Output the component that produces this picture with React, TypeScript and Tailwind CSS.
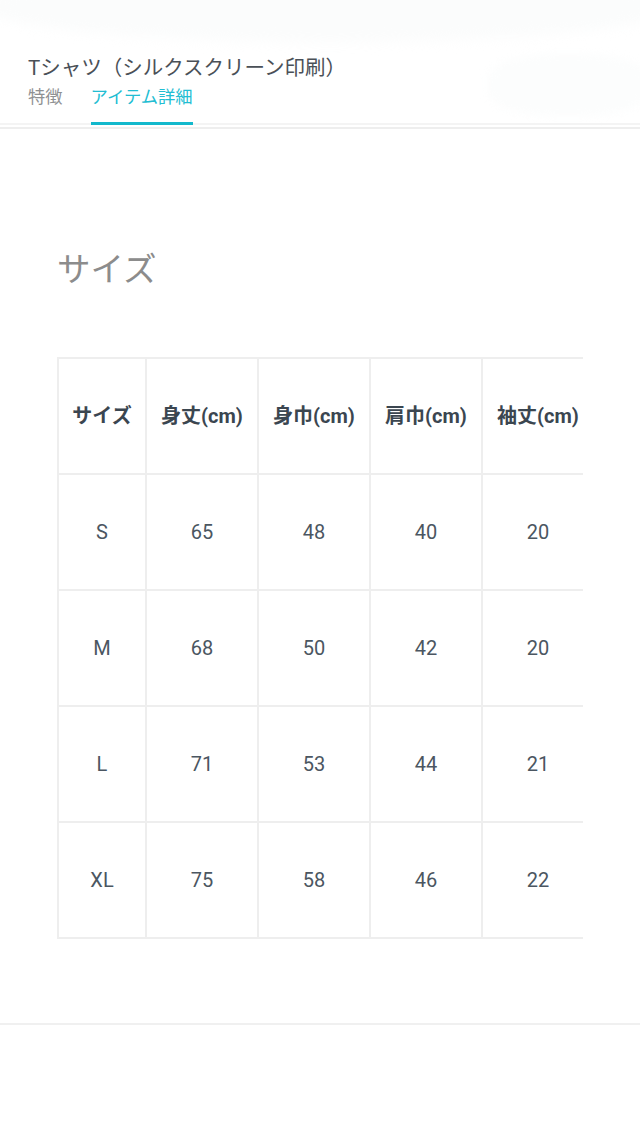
import React from "react";

const headers = ["サイズ", "身丈(cm)", "身巾(cm)", "肩巾(cm)", "袖丈(cm)"];
const rows = [
  ["S", "65", "48", "40", "20"],
  ["M", "68", "50", "42", "20"],
  ["L", "71", "53", "44", "21"],
  ["XL", "75", "58", "46", "22"],
];

const font = { fontFamily: 'Roboto, "Noto Sans CJK JP", sans-serif' };

export default function App() {
  return (
    <div className="relative w-[640px] min-h-[1138px] bg-white overflow-hidden" style={font}>
      <div className="absolute left-[-20px] top-[-30px] w-[700px] h-[72px] rounded-[50%] bg-[#fbfcfc] blur-[6px]" />
      <div className="absolute left-[488px] top-[54px] w-[160px] h-[62px] rounded-[40%] bg-[#fcfdfd] blur-[4px]" />

      <header className="relative border-b-2 border-[#f4f4f4] pt-[56px]">
        <div className="px-[28px] text-[20.5px] leading-[24px] text-[#4a5057]">
          Tシャツ（シルクスクリーン印刷）
        </div>
        <div className="flex px-[28px] gap-[28px]">
          <div className="pt-[6px] pb-[12px] border-b-[3px] border-transparent text-[17.3px] leading-[22px] text-[#8f9193]">
            特徴
          </div>
          <div className="pt-[6px] pb-[12px] border-b-[3px] border-[#12b8cc] text-[17.3px] leading-[22px] text-[#22bdd2] -mb-[2px]">
            アイテム詳細
          </div>
        </div>
      </header>
      <div className="h-[2px]" />
      <div className="border-t-2 border-[#eeeeee]" />

      <section className="pl-[57px] pt-[121px] pb-[84px]">
        <h2 className="text-[33.5px] leading-[40px] text-[#8c8c8c]">サイズ</h2>
        <div className="mt-[67px] w-[526px] overflow-hidden">
          <div className="w-max border-t-2 border-l-2 border-[#eeeeee]">
            {[headers, ...rows].map((row, ri) => (
              <div key={ri} className="flex">
                {row.map((cell, ci) => (
                  <div
                    key={ci}
                    className={`${ci === 0 ? "w-[88px]" : "w-[112px]"} h-[116px] box-border border-r-2 border-b-2 border-[#eeeeee] flex items-center justify-center ${
                      ri === 0
                        ? "text-[20px] font-bold text-[#3b4650]"
                        : "text-[20px] text-[#4b5661]"
                    }`}
                  >
                    {cell}
                  </div>
                ))}
              </div>
            ))}
          </div>
        </div>
      </section>
      <div className="border-t-2 border-[#f0f0f0]" />
    </div>
  );
}
